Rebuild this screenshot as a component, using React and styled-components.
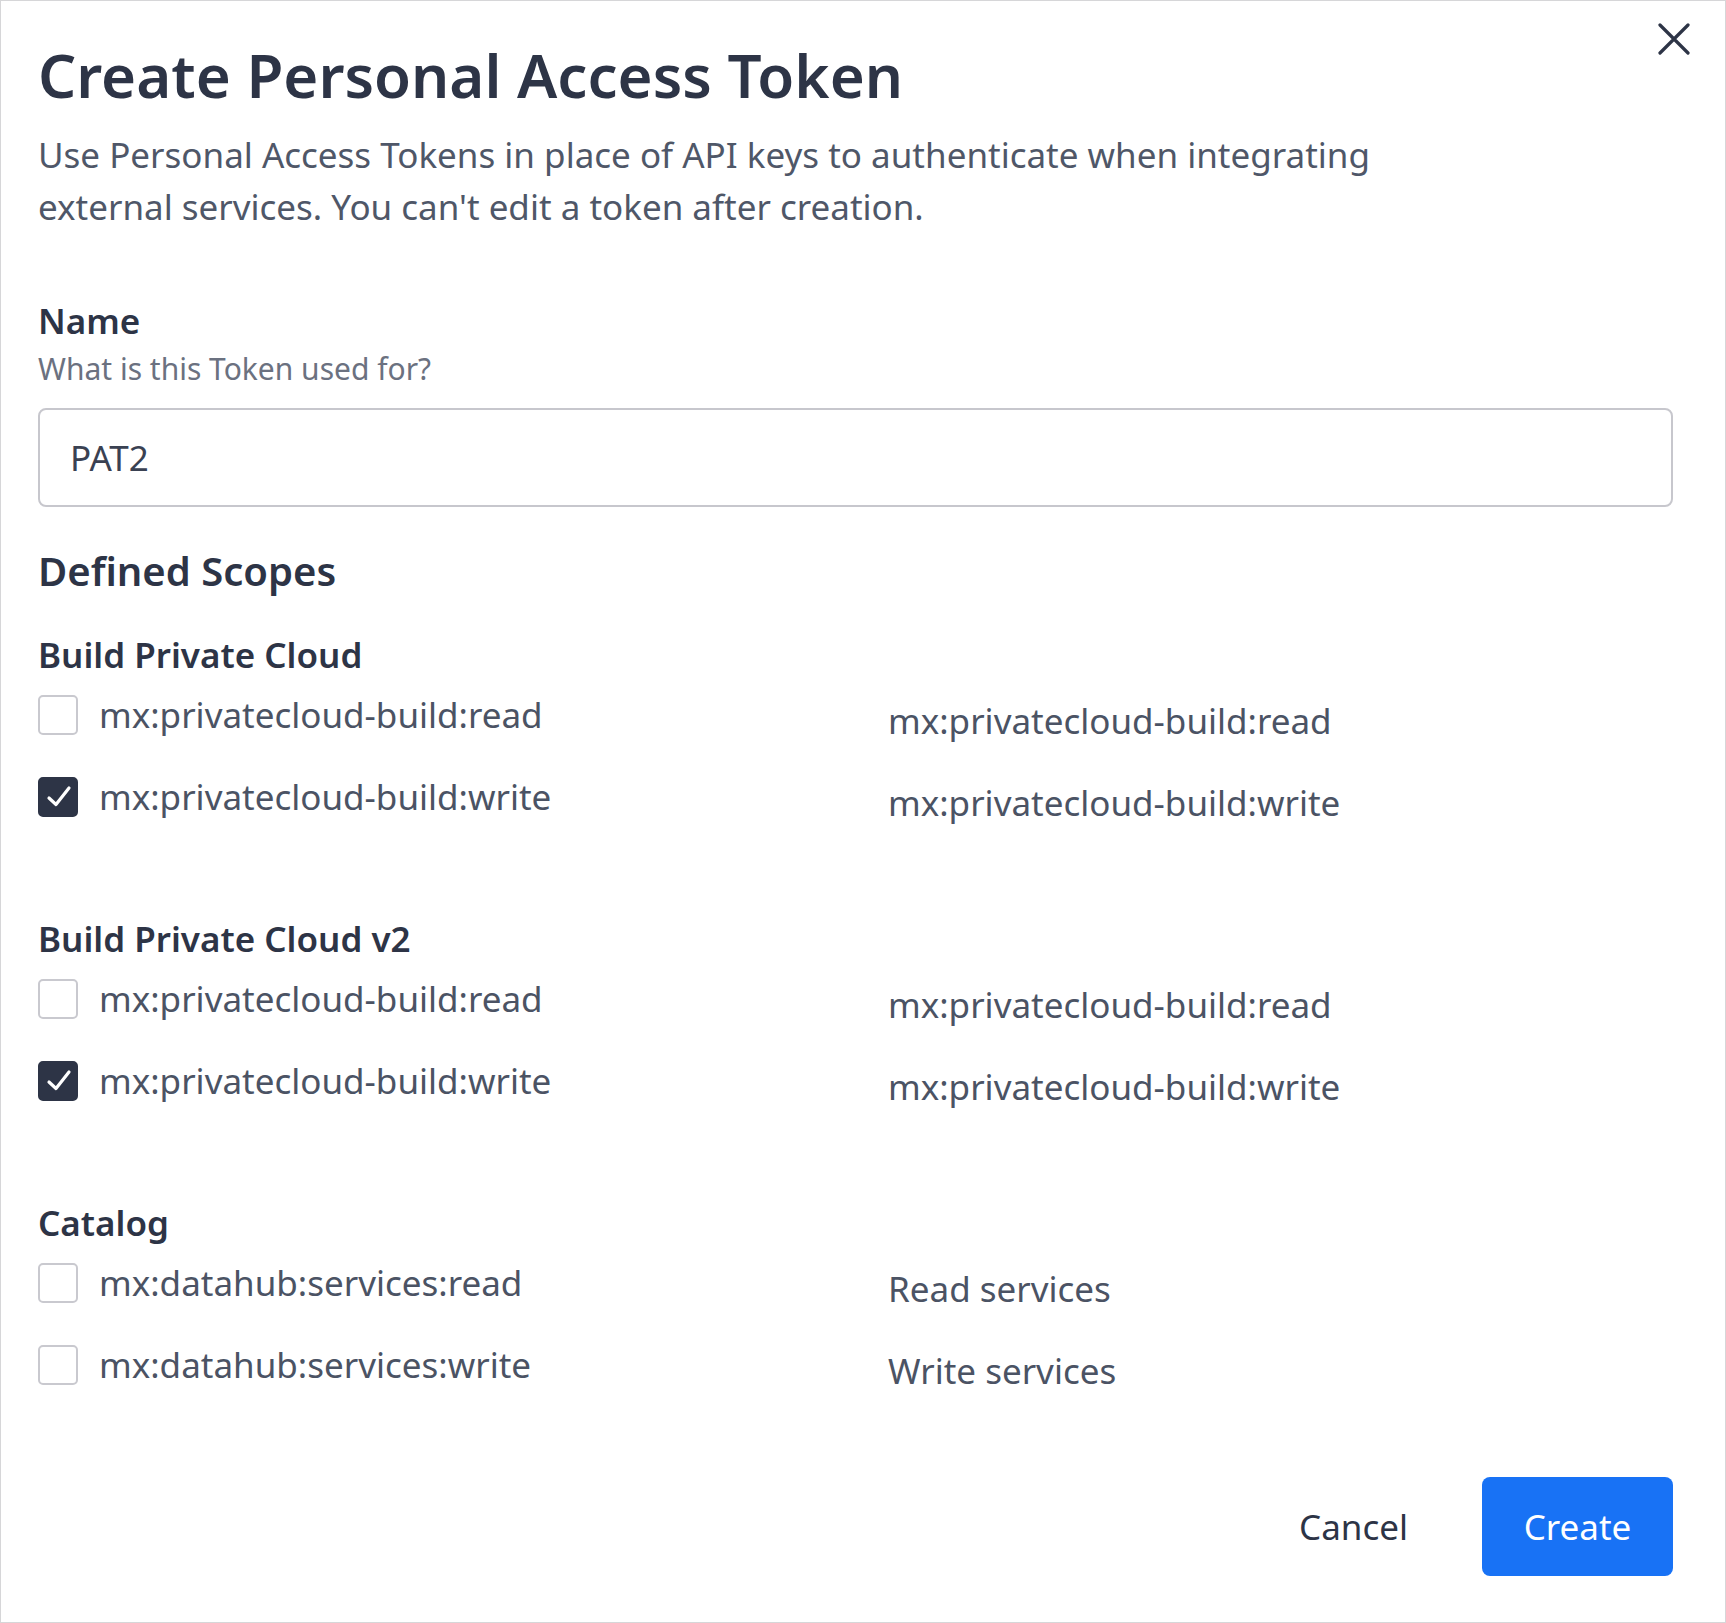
import React from "react";
import styled, { createGlobalStyle } from "styled-components";

const Global = createGlobalStyle`
  html, body { margin: 0; padding: 0; background: #ffffff; }
  body { font-family: "Noto Sans", "Open Sans", sans-serif; }
  * { box-sizing: border-box; }
`;

const Dialog = styled.div`
  position: relative;
  width: 1726px;
  height: 1623px;
  border: 1px solid #d6d6d8;
  background: #fff;
  padding: 38px 52px 46px 37px;
  display: flex;
  flex-direction: column;
  color: #2d3446;
`;

const Title = styled.h1`
  margin: 0;
  font-size: 60px;
  line-height: 72px;
  font-weight: 600;
  color: #2d3446;
`;

const CloseButton = styled.button`
  position: absolute;
  top: 22px;
  right: 35px;
  width: 32px;
  height: 32px;
  padding: 0;
  border: 0;
  background: transparent;
  cursor: pointer;
  display: flex;
  align-items: center;
  justify-content: center;
`;

const Description = styled.p`
  margin: 18px 0 0;
  max-width: 1400px;
  font-size: 35px;
  line-height: 52px;
  color: #4f5768;
`;

const FieldLabel = styled.label`
  display: block;
  margin-top: 65px;
  font-size: 35px;
  line-height: 46px;
  font-weight: 600;
  color: #2d3446;
`;

const FieldHint = styled.div`
  margin-top: 5px;
  font-size: 30px;
  line-height: 40px;
  color: #6b7180;
`;

const TextInput = styled.input`
  display: block;
  margin-top: 19px;
  width: 100%;
  height: 99px;
  border: 2px solid #c7c7cd;
  border-radius: 8px;
  padding: 0 30px;
  font-family: inherit;
  font-size: 35px;
  color: #3a4152;
  background: #fff;
  outline: none;
`;

const SectionTitle = styled.h2`
  margin: 38px 0 0;
  font-size: 40px;
  line-height: 52px;
  font-weight: 600;
  color: #2d3446;
`;

const Groups = styled.div`
  margin-top: 35px;
  display: flex;
  flex-direction: column;
  gap: 90px;
`;

const Group = styled.section`
  display: flex;
  flex-direction: column;
`;

const GroupTitle = styled.h3`
  margin: 0 0 14px;
  font-size: 35px;
  line-height: 46px;
  font-weight: 600;
  color: #2d3446;
`;

const Rows = styled.div`
  display: flex;
  flex-direction: column;
  gap: 30px;
`;

const Row = styled.div`
  display: grid;
  grid-template-columns: 850px 1fr;
  align-items: start;
`;

const CheckLabel = styled.label`
  display: flex;
  align-items: center;
  gap: 21px;
  font-size: 35px;
  line-height: 46px;
  color: #4b5364;
  cursor: pointer;
`;

const Box = styled.span`
  flex: none;
  width: 40px;
  height: 40px;
  border-radius: 5px;
  border: 2px solid ${(p) => (p.$checked ? "#2d3446" : "#c9c9cf")};
  background: ${(p) => (p.$checked ? "#2d3446" : "#fff")};
  display: flex;
  align-items: center;
  justify-content: center;
`;

const Explanation = styled.div`
  margin-top: 6px;
  font-size: 35px;
  line-height: 46px;
  color: #4b5364;
`;

const Footer = styled.div`
  margin-top: auto;
  display: flex;
  justify-content: flex-end;
  align-items: center;
  gap: 38px;
`;

const Button = styled.button`
  height: 99px;
  width: ${(p) => (p.$primary ? "191px" : "auto")};
  padding: 0 ${(p) => (p.$primary ? "0" : "36px")};
  border: 0;
  border-radius: 8px;
  font-family: inherit;
  font-size: 35px;
  background: ${(p) => (p.$primary ? "#1872f5" : "transparent")};
  color: ${(p) => (p.$primary ? "#ffffff" : "#2d3446")};
  cursor: pointer;
`;

const Checkbox = ({ checked }) => (
  <Box $checked={checked}>
    {checked && (
      <svg width="40" height="40" viewBox="0 0 40 40" style={{ margin: -2 }}>
        <path
          d="M11 21 L18 27.5 L31 11"
          fill="none"
          stroke="#fff"
          strokeWidth="3.2"
          strokeLinecap="round"
          strokeLinejoin="round"
        />
      </svg>
    )}
  </Box>
);

const groups = [
  {
    title: "Build Private Cloud",
    scopes: [
      { id: "mx:privatecloud-build:read", desc: "mx:privatecloud-build:read", checked: false },
      { id: "mx:privatecloud-build:write", desc: "mx:privatecloud-build:write", checked: true },
    ],
  },
  {
    title: "Build Private Cloud v2",
    scopes: [
      { id: "mx:privatecloud-build:read", desc: "mx:privatecloud-build:read", checked: false },
      { id: "mx:privatecloud-build:write", desc: "mx:privatecloud-build:write", checked: true },
    ],
  },
  {
    title: "Catalog",
    scopes: [
      { id: "mx:datahub:services:read", desc: "Read services", checked: false },
      { id: "mx:datahub:services:write", desc: "Write services", checked: false },
    ],
  },
];

export default function App() {
  return (
    <>
      <Global />
      <Dialog>
        <CloseButton aria-label="Close">
          <svg width="32" height="32" viewBox="0 0 32 32">
            <path
              d="M2 2 L30 30 M30 2 L2 30"
              stroke="#2d3446"
              strokeWidth="3.2"
              strokeLinecap="round"
            />
          </svg>
        </CloseButton>
        <Title>Create Personal Access Token</Title>
        <Description>
          Use Personal Access Tokens in place of API keys to authenticate when integrating
          external services. You can't edit a token after creation.
        </Description>
        <FieldLabel>Name</FieldLabel>
        <FieldHint>What is this Token used for?</FieldHint>
        <TextInput defaultValue="PAT2" />
        <SectionTitle>Defined Scopes</SectionTitle>
        <Groups>
          {groups.map((g) => (
            <Group key={g.title}>
              <GroupTitle>{g.title}</GroupTitle>
              <Rows>
                {g.scopes.map((s) => (
                  <Row key={s.id}>
                    <CheckLabel>
                      <Checkbox checked={s.checked} />
                      <span>{s.id}</span>
                    </CheckLabel>
                    <Explanation>{s.desc}</Explanation>
                  </Row>
                ))}
              </Rows>
            </Group>
          ))}
        </Groups>
        <Footer>
          <Button>Cancel</Button>
          <Button $primary>Create</Button>
        </Footer>
      </Dialog>
    </>
  );
}
